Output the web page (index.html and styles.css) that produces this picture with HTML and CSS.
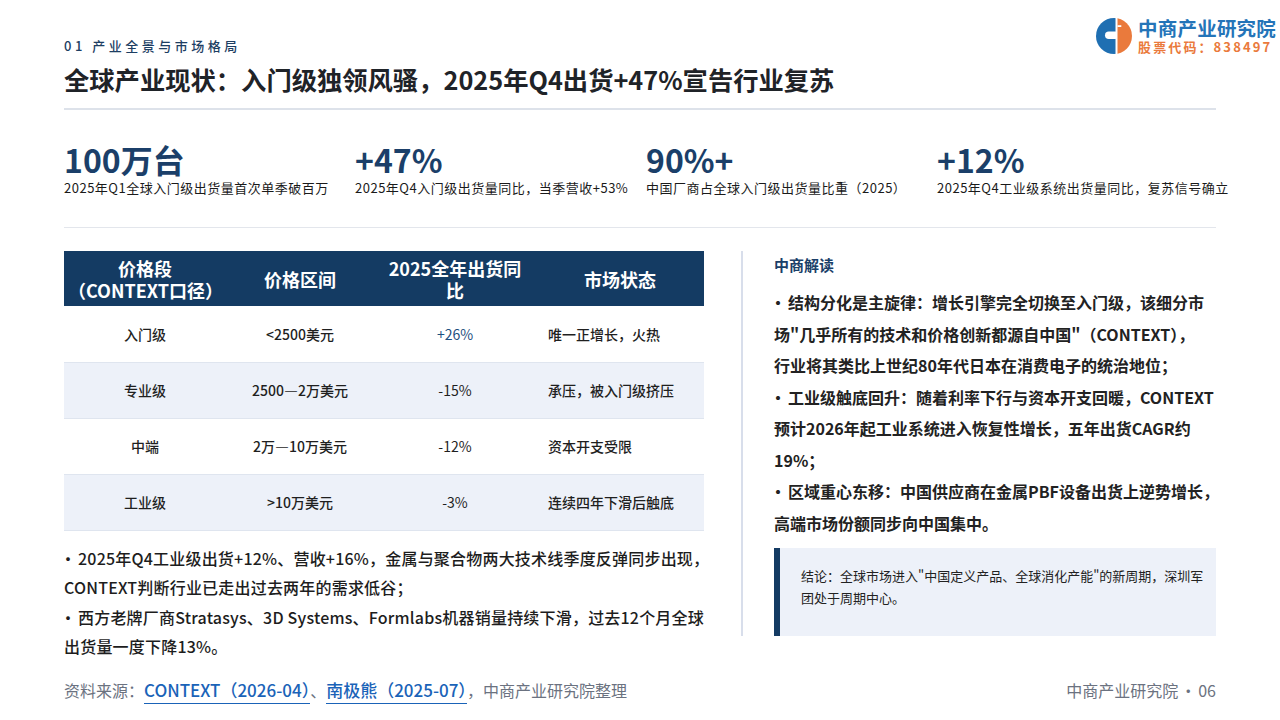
FILE: index.html
```html
<!DOCTYPE html>
<html lang="zh-CN">
<head>
<meta charset="utf-8">
<title>全球产业现状</title>
<link rel="stylesheet" href="styles.css">
</head>
<body>
<div class="page">
  <div class="logo">
    <svg class="logo-mark" viewBox="0 0 36 36" width="36" height="36">
      <defs><clipPath id="lc"><circle cx="18" cy="18" r="18"/></clipPath></defs>
      <g clip-path="url(#lc)">
        <rect x="0" y="0" width="19.5" height="36" fill="#1f6fb2"/>
        <rect x="9" y="13.5" width="14" height="7.5" rx="3.75" fill="#fff"/>
        <rect x="21.5" y="0" width="15" height="36" fill="#ea7a3c"/>
        <rect x="21.5" y="7.2" width="3.8" height="1.8" fill="#fff"/>
      </g>
    </svg>
    <div class="logo-text">
      <div class="logo-name">中商产业研究院</div>
      <div class="logo-code">股票代码：838497</div>
    </div>
  </div>

  <header class="head">
    <div class="section-label">01 产业全景与市场格局</div>
    <h1 class="title">全球产业现状：入门级独领风骚，2025年Q4出货+47%宣告行业复苏</h1>
  </header>

  <section class="stats">
    <div class="stat">
      <div class="stat-num">100万台</div>
      <div class="stat-desc">2025年Q1全球入门级出货量首次单季破百万</div>
    </div>
    <div class="stat">
      <div class="stat-num">+47%</div>
      <div class="stat-desc">2025年Q4入门级出货量同比，当季营收+53%</div>
    </div>
    <div class="stat">
      <div class="stat-num">90%+</div>
      <div class="stat-desc">中国厂商占全球入门级出货量比重（2025）</div>
    </div>
    <div class="stat">
      <div class="stat-num">+12%</div>
      <div class="stat-desc">2025年Q4工业级系统出货量同比，复苏信号确立</div>
    </div>
  </section>

  <main class="main">
    <div class="left">
      <table class="tbl">
        <colgroup>
          <col class="c1"><col class="c2"><col class="c3"><col class="c4">
        </colgroup>
        <thead>
          <tr>
            <th>价格段<br>（CONTEXT口径）</th>
            <th>价格区间</th>
            <th>2025全年出货同<br>比</th>
            <th>市场状态</th>
          </tr>
        </thead>
        <tbody>
          <tr>
            <td>入门级</td><td>&lt;2500美元</td><td class="pos">+26%</td><td class="state">唯一正增长，火热</td>
          </tr>
          <tr class="alt">
            <td>专业级</td><td>2500—2万美元</td><td class="neg">-15%</td><td class="state">承压，被入门级挤压</td>
          </tr>
          <tr>
            <td>中端</td><td>2万—10万美元</td><td class="neg">-12%</td><td class="state">资本开支受限</td>
          </tr>
          <tr class="alt">
            <td>工业级</td><td>&gt;10万美元</td><td class="neg">-3%</td><td class="state">连续四年下滑后触底</td>
          </tr>
        </tbody>
      </table>
      <div class="notes">
        <p><span class="dot">·</span>2025年Q4工业级出货+12%、营收+16%，金属与聚合物两大技术线季度反弹同步出现，<br>CONTEXT判断行业已走出过去两年的需求低谷；</p>
        <p><span class="dot">·</span>西方老牌厂商Stratasys、3D Systems、Formlabs机器销量持续下滑，过去12个月全球<br>出货量一度下降13%。</p>
      </div>
    </div>

    <aside class="right">
      <h2 class="r-head">中商解读</h2>
      <div class="r-body">
        <p><span class="dot">·</span>结构分化是主旋律：增长引擎完全切换至入门级，该细分市<br>场"几乎所有的技术和价格创新都源自中国"（CONTEXT），<br>行业将其类比上世纪80年代日本在消费电子的统治地位；</p>
        <p><span class="dot">·</span>工业级触底回升：随着利率下行与资本开支回暖，CONTEXT<br>预计2026年起工业系统进入恢复性增长，五年出货CAGR约<br>19%；</p>
        <p><span class="dot">·</span>区域重心东移：中国供应商在金属PBF设备出货上逆势增长，<br>高端市场份额同步向中国集中。</p>
      </div>
      <div class="conclusion">结论：全球市场进入"中国定义产品、全球消化产能"的新周期，深圳军<br>团处于周期中心。</div>
    </aside>
  </main>

  <footer class="foot">
    <div class="source">资料来源：<span class="link">CONTEXT（2026-04）</span>、<span class="link">南极熊（2025-07）</span>，中商产业研究院整理</div>
    <div class="pageno">中商产业研究院<span class="sep">·</span>06</div>
  </footer>
</div>
</body>
</html>
```

FILE: styles.css
```css
* { box-sizing: border-box; }
html, body { margin: 0; padding: 0; }
body {
  width: 1280px;
  height: 720px;
  background: #ffffff;
  font-family: "Noto Sans CJK SC", "Noto Sans", sans-serif;
  color: #1f2328;
  overflow: hidden;
}
.page {
  position: relative;
  width: 1280px;
  height: 720px;
  padding: 0 64px;
}

/* logo */
.logo {
  position: absolute;
  top: 17px;
  right: 4px;
  display: flex;
  align-items: center;
  gap: 6px;
}
.logo-mark { display: block; }
.logo-text { display: flex; flex-direction: column; }
.logo-name {
  font-size: 19.5px;
  font-weight: 700;
  color: #2474b8;
  line-height: 22px;
  letter-spacing: 0.2px;
}
.logo-code {
  font-size: 13px;
  font-weight: 700;
  color: #ea7a3c;
  line-height: 16px;
  letter-spacing: 2.1px;
}

/* header */
.head {
  padding-top: 36px;
  padding-bottom: 12px;
  border-bottom: 2px solid #dde2ea;
}
.section-label {
  font-size: 13px;
  line-height: 20px;
  font-weight: 500;
  color: #1d3e63;
  letter-spacing: 3.5px;
}
.title {
  margin: 6px 0 0;
  font-size: 25.3px;
  line-height: 34px;
  font-weight: 700;
  color: #1f2328;
}

/* stats */
.stats {
  display: grid;
  grid-template-columns: repeat(4, minmax(0, 1fr));
  column-gap: 12px;
  padding-top: 30px;
  padding-bottom: 30px;
  border-bottom: 1px solid #e3e6ec;
}
.stat-num {
  font-size: 32px;
  line-height: 38px;
  font-weight: 700;
  color: #1b3f69;
}
.stat-desc {
  margin-top: 1px;
  font-size: 13px;
  line-height: 18px;
  color: #1a1a1a;
  letter-spacing: 0.5px;
  white-space: nowrap;
}

/* main */
.main {
  display: flex;
  align-items: flex-start;
  margin-top: 23px;
}
.left { width: 640px; flex: none; }
.right {
  flex: none;
  width: 475px;
  margin-left: 37px;
  border-left: 2px solid #d8deeb;
  padding-left: 31px;
}

/* table */
.tbl {
  width: 640px;
  border-collapse: collapse;
  table-layout: fixed;
}
.c1 { width: 162px; }
.c2 { width: 148px; }
.c3 { width: 162px; }
.c4 { width: 168px; }
.tbl th {
  height: 55px;
  background: #143b63;
  color: #ffffff;
  font-size: 18px;
  font-weight: 700;
  line-height: 22px;
  padding: 0 4px;
  text-align: center;
  white-space: nowrap;
}
.tbl td {
  height: 56px;
  font-size: 14px;
  font-weight: 500;
  color: #1f1f1f;
  text-align: center;
  border-bottom: 1px solid #dfe5ef;
  padding: 0 8px;
}
.tbl tr.alt td { background: #edf1f9; }
.tbl td.state { text-align: left; padding-left: 12px; }
.tbl td.pos { color: #1d4f80; font-weight: 400; }
.tbl td.neg { font-weight: 400; }

/* bullets */
.dot {
  display: inline-block;
  width: 18px;
  margin-left: -4px;
  text-align: left;
}

/* notes */
.notes { margin-top: 13px; }
.notes p {
  margin: 0;
  font-size: 16px;
  line-height: 29.5px;
  font-weight: 500;
  color: #1d1d1d;
  letter-spacing: 0.2px;
  white-space: nowrap;
}

/* right column */
.r-head {
  margin: 0;
  padding-top: 4px;
  font-size: 15px;
  line-height: 20px;
  font-weight: 700;
  color: #1b3f69;
}
.r-body { margin-top: 12px; }
.r-body p {
  margin: 0;
  font-size: 16px;
  line-height: 31.5px;
  font-weight: 700;
  color: #222;
  white-space: nowrap;
}
.conclusion {
  margin-top: 9px;
  background: #edf1f9;
  border-left: 6px solid #143b63;
  padding: 17px 8px 27px 21px;
  font-size: 13px;
  line-height: 22px;
  color: #222;
  white-space: nowrap;
}

/* footer */
.foot {
  position: absolute;
  left: 64px;
  right: 64px;
  top: 680px;
  display: flex;
  justify-content: space-between;
  font-size: 16px;
  line-height: 20px;
  color: #6b7280;
}
.link {
  color: #1a63b8;
  font-size: 17px;
  font-weight: 500;
  border-bottom: 1.5px solid #1a63b8;
  padding-bottom: 1px;
}
.sep {
  display: inline-block;
  width: 20px;
  text-align: center;
}
```
